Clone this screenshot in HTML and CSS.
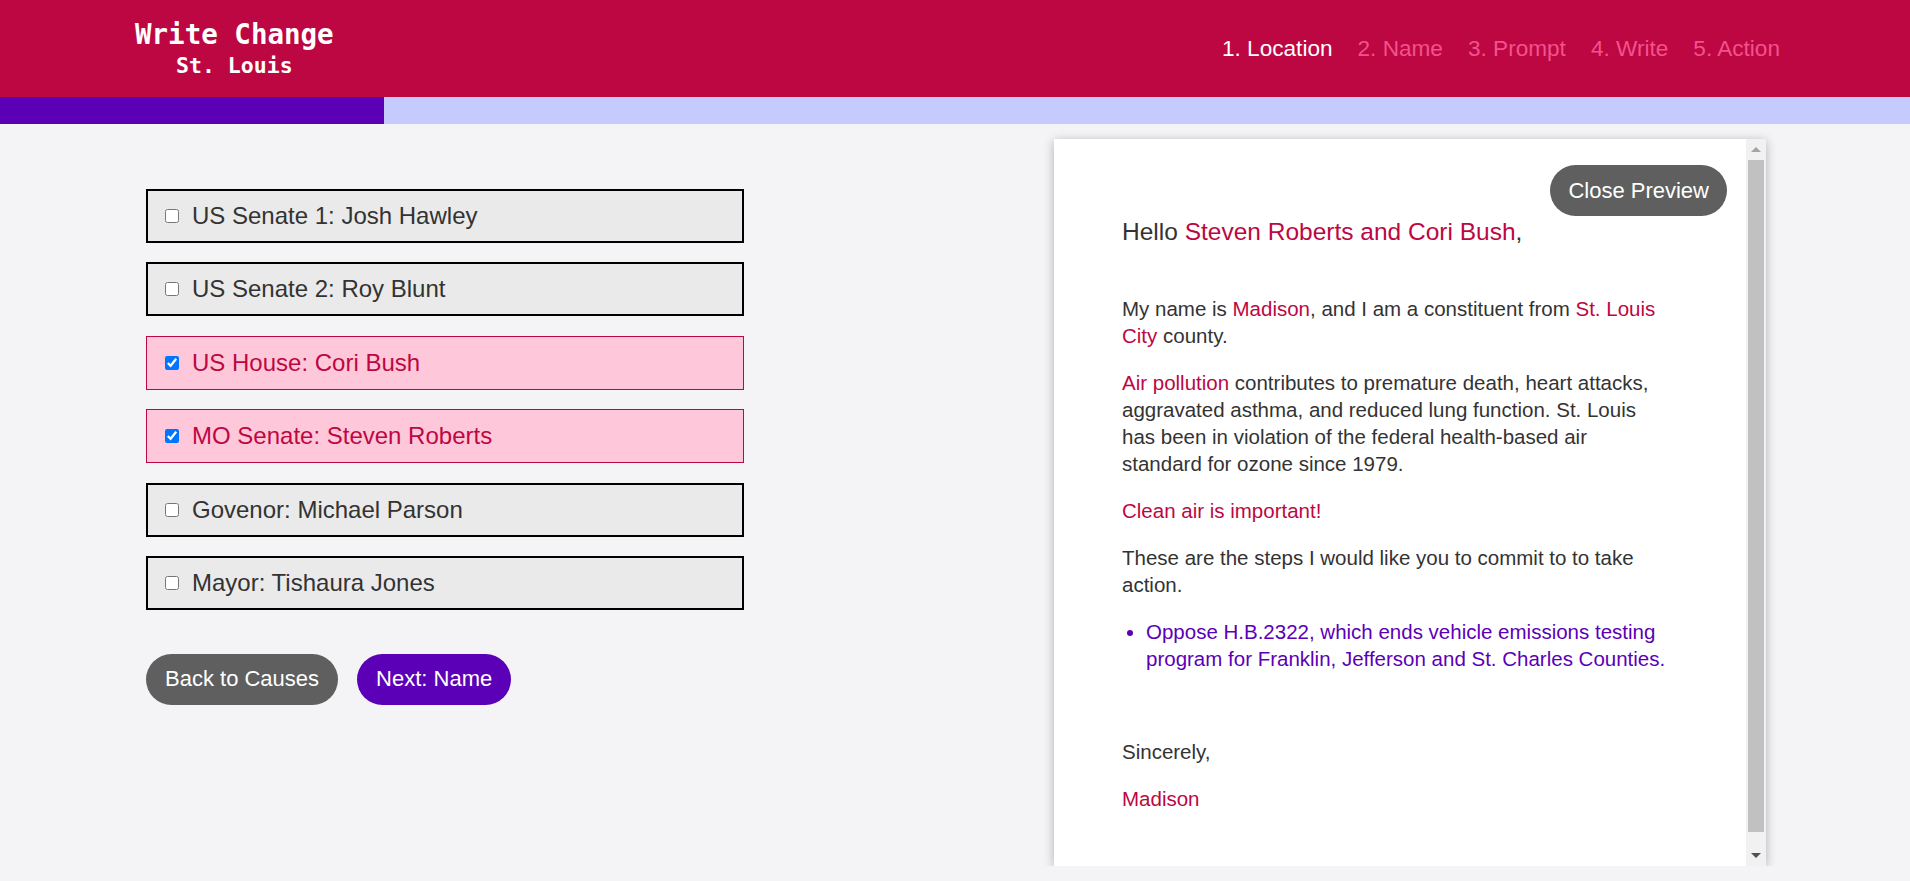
FILE: index.html
```html
<!DOCTYPE html>
<html lang="en">
<head>
<meta charset="utf-8">
<title>Write Change – St. Louis</title>
<link rel="stylesheet" href="styles.css">
</head>
<body>
<header class="topbar">
  <div class="brand">
    <div class="brand-title">Write Change</div>
    <div class="brand-sub">St. Louis</div>
  </div>
  <nav class="steps">
    <span class="step active">1. Location</span>
    <span class="step">2. Name</span>
    <span class="step">3. Prompt</span>
    <span class="step">4. Write</span>
    <span class="step">5. Action</span>
  </nav>
</header>
<div class="progress"><div class="progress-fill" style="width:20.1%"></div></div>

<main class="main">
  <section class="picker">
    <div class="reps">
      <label class="rep"><input type="checkbox"><span>US Senate 1: Josh Hawley</span></label>
      <label class="rep"><input type="checkbox"><span>US Senate 2: Roy Blunt</span></label>
      <label class="rep checked"><input type="checkbox" checked><span>US House: Cori Bush</span></label>
      <label class="rep checked"><input type="checkbox" checked><span>MO Senate: Steven Roberts</span></label>
      <label class="rep"><input type="checkbox"><span>Govenor: Michael Parson</span></label>
      <label class="rep"><input type="checkbox"><span>Mayor: Tishaura Jones</span></label>
    </div>
    <div class="actions">
      <button class="btn btn-gray">Back to Causes</button>
      <button class="btn btn-purple">Next: Name</button>
    </div>
  </section>

  <aside class="preview">
    <div class="preview-body">
      <div class="close-row"><button class="btn btn-gray">Close Preview</button></div>
      <div class="letter">
        <p class="hello">Hello <span class="hl">Steven Roberts and Cori Bush</span>,</p>
        <p>My name is <span class="hl">Madison</span>, and I am a constituent from <span class="hl">St. Louis City</span> county.</p>
        <p><span class="hl">Air pollution</span> contributes to premature death, heart attacks, aggravated asthma, and reduced lung function. St. Louis<br>has been in violation of the federal health-based air<br>standard for ozone since 1979.</p>
        <p class="hl">Clean air is important!</p>
        <p>These are the steps I would like you to commit to to take action.</p>
        <ul class="asks">
          <li>Oppose H.B.2322, which ends vehicle emissions testing program for Franklin, Jefferson and St. Charles Counties.</li>
        </ul>
        <p class="signoff">Sincerely,</p>
        <p class="hl">Madison</p>
      </div>
    </div>
    <div class="scrollbar">
      <div class="sb-btn"><span class="arrow-up"></span></div>
      <div class="sb-thumb"></div>
      <div class="sb-btn sb-btn-down"><span class="arrow-down"></span></div>
    </div>
  </aside>
</main>
</body>
</html>
```

FILE: styles.css
```css
* { box-sizing: border-box; }

body {
  margin: 0;
  background: #f4f4f6;
  font-family: "Liberation Sans", Arial, sans-serif;
  color: #333333;
}

/* Header */
.topbar {
  height: 97px;
  background: #bd0742;
  display: flex;
  align-items: center;
  justify-content: space-between;
  padding: 0 130px 0 135px;
}

.brand {
  font-family: "DejaVu Sans Mono", "Liberation Mono", monospace;
  font-weight: bold;
  color: #ffffff;
  text-align: center;
  margin-top: 3px;
}

.brand-title {
  font-size: 27.5px;
  line-height: 32px;
}

.brand-sub {
  font-size: 21.5px;
  line-height: 32px;
}

.steps {
  display: flex;
  gap: 25px;
  font-size: 22.6px;
}

.step {
  color: #f2528c;
}

.step.active {
  color: #ffffff;
}

.progress {
  height: 27px;
  background: #c5cbfc;
}

.progress-fill {
  height: 100%;
  background: #5b00b7;
}

/* Main */
.main {
  display: flex;
  justify-content: space-between;
  padding: 0 144px 0 146px;
}

.picker {
  width: 598px;
  padding-top: 65px;
}

.reps {
  display: flex;
  flex-direction: column;
  gap: 19.4px;
}

.rep {
  display: flex;
  align-items: center;
  gap: 13px;
  height: 54px;
  padding-left: 17px;
  border: 2px solid #000000;
  background: #eaeaea;
  font-size: 24px;
  color: #333333;
}

.rep input {
  width: 14px;
  height: 14px;
  margin: 0;
}

.rep.checked {
  border: 1px solid #bd0742;
  padding-left: 18px;
  background: #ffc8da;
  color: #bd0742;
}

.actions {
  display: flex;
  gap: 19px;
  margin-top: 44px;
}

.btn {
  height: 51px;
  border: none;
  border-radius: 26px;
  padding: 0 19px;
  font-family: "Liberation Sans", Arial, sans-serif;
  font-size: 22px;
  color: #ffffff;
  cursor: pointer;
}

.btn-gray { background: #5f5f5f; }
.btn-purple { background: #5b00b7; }

/* Preview */
.preview {
  margin-top: 15px;
  width: 712px;
  height: 727px;
  background: #ffffff;
  box-shadow: 0 2px 10px rgba(0, 0, 0, 0.28);
  display: flex;
}

.preview-body {
  flex: 1;
  overflow: hidden;
  padding: 26px 19px 0 20px;
}

.close-row {
  display: flex;
  justify-content: flex-end;
}

.close-row .btn {
  padding: 0 18px;
}

.letter {
  width: 555px;
  margin-left: 48px;
  font-size: 20.5px;
  line-height: 27px;
  color: #333333;
}

.letter p {
  margin: 0 0 20px;
}

.letter .hello {
  font-size: 24.5px;
  margin: 2px 0 50px;
}

.hl { color: #bd0742; }

.asks {
  margin: 0 0 20px;
  padding-left: 24px;
  color: #5b00b7;
}

.letter .signoff {
  margin-top: 66px;
}

/* Scrollbar */
.scrollbar {
  width: 20px;
  background: #f1f1f1;
  display: flex;
  flex-direction: column;
}

.sb-btn {
  height: 21px;
  display: flex;
  align-items: center;
  justify-content: center;
}

.sb-btn-down {
  margin-top: 13px;
}

.sb-thumb {
  flex: 1;
  margin: 0 2px;
  background: #c1c1c1;
}

.arrow-up {
  width: 0;
  height: 0;
  border-left: 5px solid transparent;
  border-right: 5px solid transparent;
  border-bottom: 5px solid #a3a3a3;
}

.arrow-down {
  width: 0;
  height: 0;
  border-left: 5px solid transparent;
  border-right: 5px solid transparent;
  border-top: 5px solid #505050;
}
```
